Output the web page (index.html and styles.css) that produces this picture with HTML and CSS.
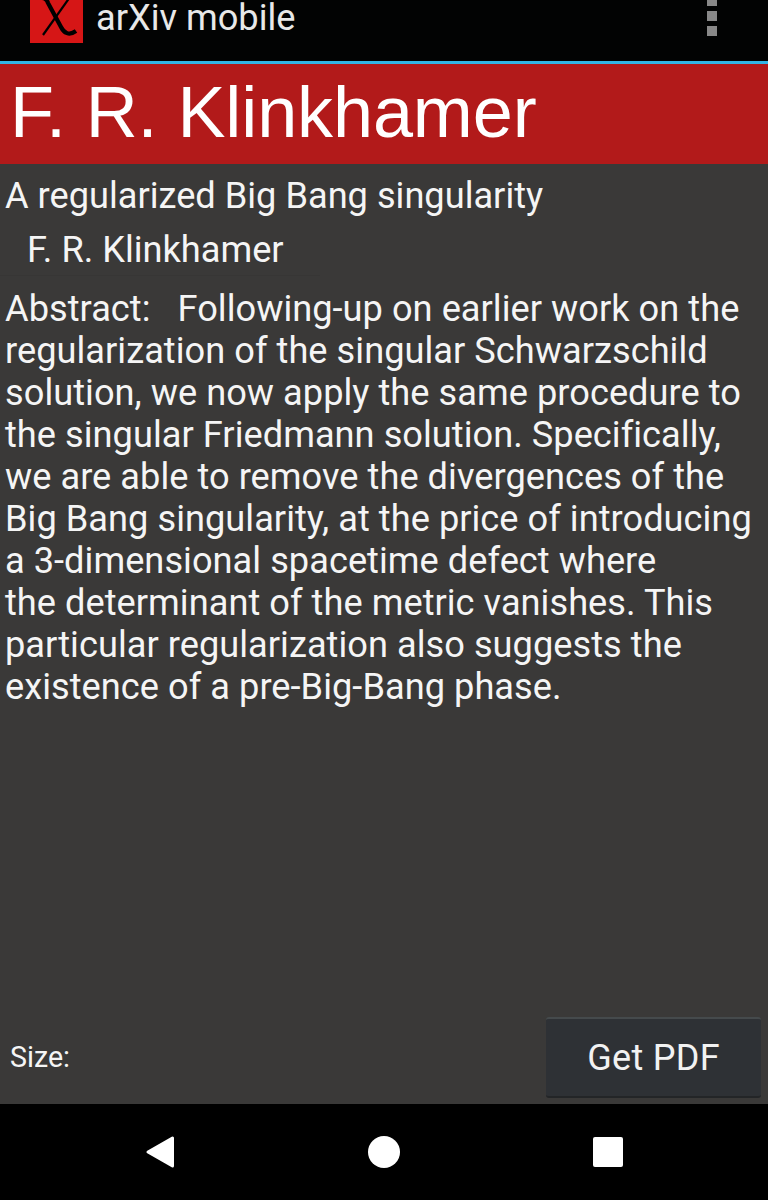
FILE: index.html
```html
<!DOCTYPE html>
<html lang="en">
<head>
  <meta charset="UTF-8" />
  <meta name="viewport" content="width=device-width, initial-scale=1.0"/>
  <title>arXiv mobile</title>
  <link rel="stylesheet" href="styles.css">
</head>
<body>
  <div class="screen">
    <header class="action-bar">
      <div class="logo">
        <svg width="53" height="43" viewBox="0 0 53 43">
          <path d="M12 -2 C15 -2 17 0 18 3 L31 27 C34 33 39 36 46 31" fill="none" stroke="#000" stroke-width="4.2"/>
          <path d="M40 -3 L13 35" fill="none" stroke="#000" stroke-width="2.2"/>
        </svg>
      </div>
      <div class="app-name">arXiv mobile</div>
      <div class="overflow">
        <span class="dot"></span>
        <span class="dot"></span>
        <span class="dot"></span>
      </div>
    </header>

    <h1 class="banner">F. R. Klinkhamer</h1>

    <main class="content">
      <div class="paper-title">A regularized Big Bang singularity</div>
      <div class="paper-author">F. R. Klinkhamer</div>
      <div class="author-rule"></div>
      <p class="abstract">Abstract: &nbsp; Following-up on earlier work on the<br>regularization of the singular Schwarzschild<br>solution, we now apply the same procedure to<br>the singular Friedmann solution. Specifically,<br>we are able to remove the divergences of the<br>Big Bang singularity, at the price of introducing<br>a 3-dimensional spacetime defect where<br>the determinant of the metric vanishes. This<br>particular regularization also suggests the<br>existence of a pre-Big-Bang phase.</p>
    </main>

    <div class="footer-row">
      <span class="size-label">Size:</span>
      <button class="pdf-button">Get PDF</button>
    </div>

    <nav class="nav-bar">
      <svg class="nav-icon" width="30" height="34" viewBox="0 0 30 34">
        <path d="M27.5 3 V31 L3 17 Z" fill="#fff" stroke="#fff" stroke-width="3" stroke-linejoin="round"/>
      </svg>
      <span class="nav-home"></span>
      <span class="nav-recent"></span>
    </nav>
  </div>
</body>
</html>
```

FILE: styles.css
```css
html, body {
  margin: 0;
  padding: 0;
  background: #000;
}

.screen {
  width: 768px;
  height: 1200px;
  display: flex;
  flex-direction: column;
  overflow: hidden;
  font-family: Roboto, sans-serif;
  color: #f5f5f5;
  background: #3a3938;
}

.action-bar {
  height: 61px;
  flex: none;
  display: flex;
  align-items: flex-start;
  background: #020303;
  border-bottom: 3px solid #33b5e5;
}

.logo {
  width: 53px;
  height: 43px;
  margin-left: 30px;
  background: #d61616;
}

.logo svg {
  display: block;
}

.app-name {
  margin-left: 13px;
  font-size: 36.2px;
  line-height: 36px;
  color: #e8e8e8;
}

.overflow {
  margin-left: auto;
  margin-right: 51px;
  margin-top: -4px;
  display: flex;
  flex-direction: column;
  gap: 5px;
}

.dot {
  width: 10px;
  height: 10px;
  background: #888;
}

.banner {
  height: 100px;
  flex: none;
  margin: 0;
  padding-left: 10px;
  font-family: "Liberation Sans", Arial, sans-serif;
  font-size: 72px;
  font-weight: normal;
  letter-spacing: -0.1px;
  line-height: 96px;
  color: #fff;
  background: #b21a1a;
}

.content {
  flex: 1;
  padding: 11px 5px 0;
  font-size: 36.2px;
}

.paper-title {
  line-height: 42px;
}

.paper-author {
  margin-top: 12px;
  padding-bottom: 4px;
  padding-left: 22px;
  line-height: 42px;
}

.author-rule {
  width: 320px;
  height: 1px;
  margin-left: -5px;
  background: #373635;
}

.abstract {
  margin: 12px 0 0;
  letter-spacing: 0.03px;
  line-height: 42px;
}

.footer-row {
  height: 87px;
  flex: none;
  display: flex;
  align-items: flex-start;
  justify-content: space-between;
  padding: 0 7px 0 10px;
}

.size-label {
  margin-top: 25px;
  font-size: 28.6px;
  line-height: 30px;
}

.pdf-button {
  width: 215px;
  height: 81px;
  padding: 0;
  border: none;
  border-top: 2px solid #454a4c;
  border-bottom: 2px solid #232527;
  border-radius: 3px;
  font-family: Roboto, sans-serif;
  font-size: 36px;
  letter-spacing: 0.3px;
  color: #f2f2f2;
  background: #2e3135;
}

.nav-bar {
  height: 96px;
  flex: none;
  display: flex;
  align-items: center;
  background: #000;
}

.nav-icon {
  margin-left: 145px;
}

.nav-home {
  width: 32px;
  height: 32px;
  margin-left: 193px;
  border-radius: 50%;
  background: #fff;
}

.nav-recent {
  width: 30px;
  height: 30px;
  margin-left: 193px;
  border-radius: 2px;
  background: #fff;
}
```
